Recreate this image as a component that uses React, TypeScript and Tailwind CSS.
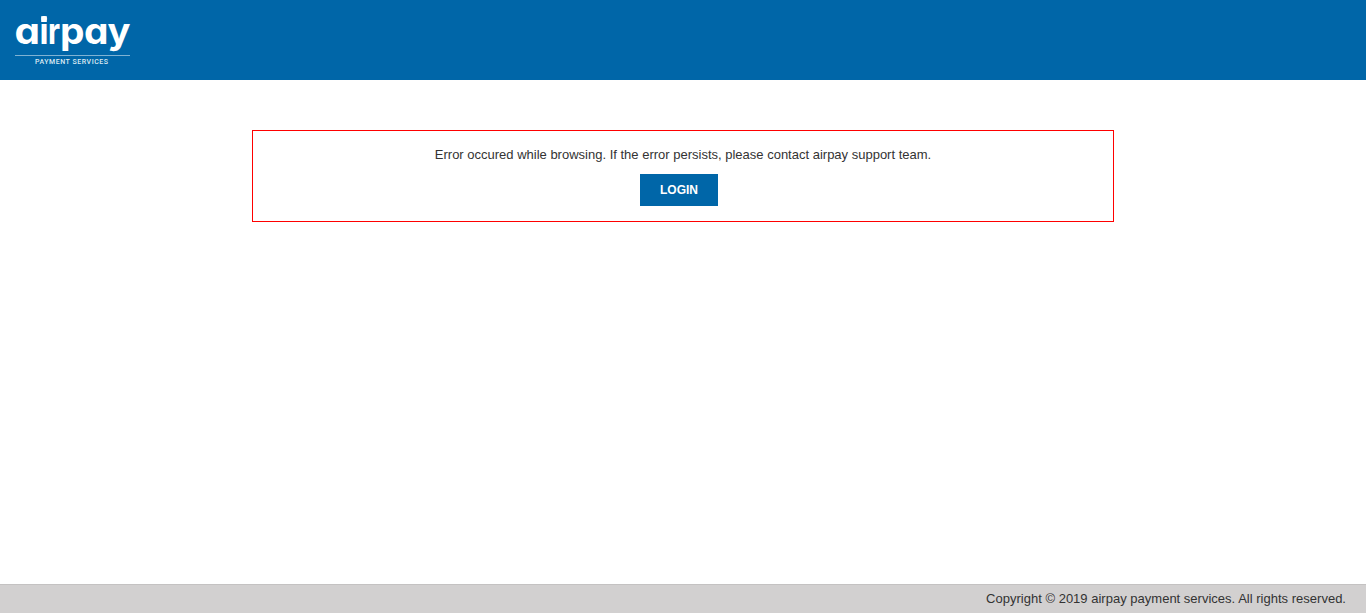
const wordmark = [
  { glyph: 'a', x: -0.5, width: 25.5 },
  { glyph: 'i', x: 24.5, width: 9 },
  { glyph: 'r', x: 33, width: 12 },
  { glyph: 'p', x: 45, width: 24.5 },
  { glyph: 'a', x: 69, width: 24.5 },
  { glyph: 'y', x: 92.5, width: 23 },
];

function Logo() {
  return (
    <svg
      width="116"
      height="54"
      viewBox="0 0 116 54"
      className="block overflow-visible"
      role="img"
      aria-label="airpay payment services"
    >
      <text
        y="29"
        className="fill-white font-['Inter',sans-serif] text-[36px] font-bold [font-feature-settings:'cv11'] [font-optical-sizing:none]"
      >
        {wordmark.map(({ glyph, x, width }) => (
          <tspan key={x} x={x} textLength={width} lengthAdjust="spacingAndGlyphs">
            {glyph}
          </tspan>
        ))}
      </text>
      <rect x="26.2" y="1.2" width="5.6" height="5.8" className="fill-white" />
      <rect x="0" y="40" width="115" height="1" className="fill-[#7fb2d3]" />
      <text
        x="20"
        y="49"
        textLength="73"
        className="fill-[#dceaf3] font-['Roboto',sans-serif] text-[7px] font-medium"
      >
        PAYMENT SERVICES
      </text>
    </svg>
  );
}

export default function App() {
  return (
    <div className="flex h-[613px] flex-col bg-white font-['Liberation_Sans',Arial,sans-serif] text-[#333333]">
      <header className="h-20 shrink-0 bg-[#0066a8] pt-[15px] pl-[15px]">
        <Logo />
      </header>
      <main className="flex flex-1 flex-col items-center pt-[50px]">
        <section className="flex h-[92px] w-[862px] flex-col items-center border border-[#ff0000] pt-[15px]">
          <p className="text-[13px] leading-[18px] whitespace-nowrap">
            Error occured while browsing. If the error persists, please contact airpay support team.
          </p>
          <button
            type="button"
            className="mt-[10px] mr-2 h-8 w-[78px] bg-[#0066a8] text-xs font-bold text-white"
          >
            LOGIN
          </button>
        </section>
      </main>
      <footer className="flex h-[29px] shrink-0 items-center justify-end border-t border-[#c4c2c2] bg-[#d2d0d0] pr-5 text-[13px] tracking-[0.01px]">
        Copyright © 2019 airpay payment services. All rights reserved.
      </footer>
    </div>
  );
}
